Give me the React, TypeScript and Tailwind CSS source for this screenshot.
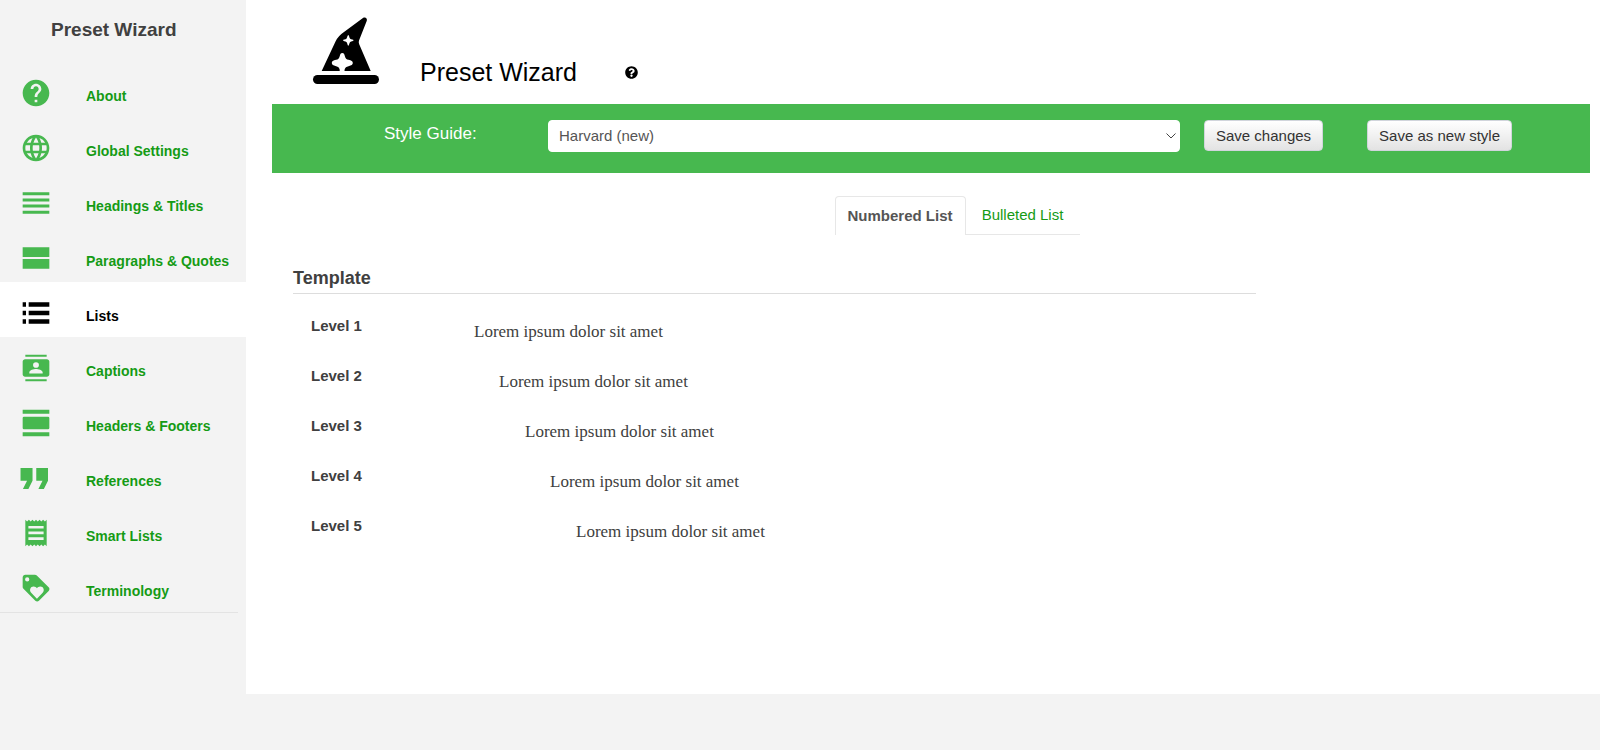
import type { ReactNode } from "react";
import { FaQuestionCircle } from "react-icons/fa";
import { MdHelp, MdLanguage } from "react-icons/md";

const icon = (body: ReactNode) => (
  <svg viewBox="0 0 24 24" fill="currentColor" className="size-8" aria-hidden="true">
    {body}
  </svg>
);

const menu = [
  { label: "About", icon: <MdHelp className="size-8" /> },
  { label: "Global Settings", icon: <MdLanguage className="size-8" /> },
  { label: "Headings & Titles", icon: icon(<path d="M2 4h20v2.25H2zM2 8.6h20v2.25H2zM2 13.1h20v2.25H2zM2 17.75h20V20H2z" />) },
  { label: "Paragraphs & Quotes", icon: icon(<path d="M2 4h20v7.3H2zM2 12.7h20V20H2z" />) },
  {
    label: "Lists",
    active: true,
    icon: icon(<path d="M2 4h2.5v3.3H2zM6.5 4H22v3.3H6.5zM2 10.3h2.5v3.4H2zM6.5 10.3H22v3.4H6.5zM2 16.7h2.5V20H2zM6.5 16.7H22V20H6.5z" />),
  },
  {
    label: "Captions",
    icon: icon(
      <path
        fillRule="evenodd"
        d="M4 2h16v1.6H4zM4 20.4h16V22H4zM3.8 5.4h16.4c1 0 1.8.8 1.8 1.7v9.8c0 .9-.8 1.7-1.8 1.7H3.8c-1 0-1.8-.8-1.8-1.7V7.1c0-.9.8-1.7 1.8-1.7zM12 7.6a2.2 2.1 0 1 0 0 4.2 2.2 2.1 0 1 0 0-4.2zM7 16.2h10v-1c0-1.6-3.3-2.5-5-2.5s-5 .9-5 2.5z"
      />,
    ),
  },
  {
    label: "Headers & Footers",
    icon: icon(<path d="M2 2h20v3H2zM3 7.3h18a1 1 0 0 1 1 1v7.4a1 1 0 0 1-1 1H3a1 1 0 0 1-1-1V8.3a1 1 0 0 1 1-1zM2 19h20v3H2z" />),
  },
  { label: "References", icon: icon(<path d="M.4 4.5h9V14l-3.1 6.2H2.2L5.3 14H.4zM12.2 4.5h8.8V14l-3.1 6.2h-4.1L16.900 14h-4.700z" />) },
  {
    label: "Smart Lists",
    icon: icon(
      <path
        fillRule="evenodd"
        d="M4 2l1.3 1.3L6.7 2 8 3.3 9.3 2l1.4 1.3L12 2l1.3 1.3L14.7 2 16 3.3 17.3 2l1.4 1.3L20 2v20l-1.3-1.3L17.3 22 16 20.7 14.7 22l-1.4-1.3L12 22l-1.3-1.3L9.3 22 8 20.7 6.7 22l-1.4-1.3L4 22zM6.3 6.7v1.9h11.4V6.7zM6.3 10.9v2h11.4v-2zM6.3 15.2v2h11.4v-2z"
      />,
    ),
  },
  {
    label: "Terminology",
    icon: icon(
      <path
        fillRule="evenodd"
        d="M4 2h7.200c.6 0 1 .2 1.400.6l8.900 8.900c.8.800.8 1.900 0 2.700l-7.300 7.300c-.8.800-1.900.8-2.700 0L2.600 12.600c-.4-.4-.6-.9-.6-1.400V4c0-1.100.9-2 2-2zM5.400 4a1.600 1.600 0 1 0 0 3.200 1.600 1.600 0 1 0 0-3.200zM12.700 20l4.300-4.400c1.700-1.900.6-4.700-1.800-4.700-1.200 0-1.900.6-2.500 1.300-.6-.7-1.300-1.300-2.500-1.300-2.400 0-3.500 2.800-1.800 4.700z"
      />,
    ),
  },
];

const levels = [
  { name: "Level 1", indent: "pl-0" },
  { name: "Level 2", indent: "pl-[25px]" },
  { name: "Level 3", indent: "pl-[51px]" },
  { name: "Level 4", indent: "pl-[76px]" },
  { name: "Level 5", indent: "pl-[102px]" },
];

function WizardHat() {
  return (
    <svg viewBox="0 0 66 66" className="size-[66px] overflow-visible" aria-hidden="true">
      <path d="M8.7 53 22.5 23.5Q25 18 31 14L50.3-.2C52.5-1.3 54.5.5 53.8 2.7L46 22.5Q45.4 24.3 46.2 26.2L57.7 53Z" />
      <rect y="57" width="66" height="9" rx="4.5" />
      <path
        fill="#fff"
        d="M35.3 17c.8 0 .9 3 1.9 3.7s3.4.8 3.4 1.600-2.600 1-3.400 1.700-1.100 3.700-1.900 3.700-1-3-1.900-3.700-3.400-.9-3.400-1.700 2.600-.9 3.400-1.600 1.100-3.700 1.900-3.700zM29.3 35c1.600 0 2 1 2.600 3.200.7 2.600 1.400 3 3.600 3.600 3 .8 4.300 1.500 4.300 3.200s-1.300 2.400-4.300 3.200c-2.200.6-3.300 1.300-3.800 3L31.400 53.500h-4.600L26.600 51.200c-.5-1.700-1.300-2.400-3.500-3-3-.8-4.300-1.500-4.300-3.200s1.300-2.400 4.300-3.200c2.200-.6 2.900-1 3.600-3.600.6-2.200 1-3.200 2.600-3.200z"
      />
    </svg>
  );
}

const button =
  "h-[31px] rounded border border-gray-300 bg-linear-to-b from-white to-[#e3e3e3] px-[11px] text-[15px] leading-5 text-[#333]";

export default function App() {
  return (
    <div className="min-h-screen bg-[#f3f3f3] font-['Liberation_Sans',Arial,sans-serif] text-[#404040]">
      <div className="flex min-h-[694px]">
        <aside className="w-[246px] shrink-0">
          <h2 className="pt-4 pl-[51px] text-[19px] leading-7 font-bold">Preset Wizard</h2>
          <nav className="mt-[18px]">
            {menu.map((item) => (
              <a
                key={item.label}
                href="#"
                className={`flex h-[55px] items-start pt-[15px] pl-5 text-sm font-bold whitespace-nowrap ${
                  item.active ? "bg-white text-black" : "text-[#159b15]"
                }`}
              >
                <span className={`w-[66px] shrink-0 ${item.active ? "text-black" : "text-[#47b84f]"}`}>{item.icon}</span>
                <span className="pt-[3px] leading-8">{item.label}</span>
              </a>
            ))}
          </nav>
          <hr className="mr-2 border-[#e3e3e3]" />
        </aside>

        <main className="min-w-0 flex-1 bg-white pr-2.5 pl-[26px]">
          <header className="flex h-[104px] items-end pb-5 pl-[41px]">
            <WizardHat />
            <h1 className="ml-[41px] text-[25px] leading-6 text-black">Preset Wizard</h1>
            <button type="button" aria-label="Help" className="mb-[5px] ml-12 text-black">
              <FaQuestionCircle className="size-[13px]" />
            </button>
          </header>

          <div className="flex h-[69px] items-start bg-[#47b84f] pt-4">
            <label htmlFor="style-guide" className="w-[276px] pl-[112px] text-[17px] leading-7 text-white">
              Style Guide:
            </label>
            <div className="relative mr-6 flex-1">
              <select
                id="style-guide"
                className="h-8 w-full appearance-none rounded border border-white bg-white px-2.5 text-[15px] text-[#555]"
              >
                <option>Harvard (new)</option>
              </select>
              <svg viewBox="0 0 10 6" fill="none" stroke="#444" className="pointer-events-none absolute top-[13px] right-1 w-2.5">
                <path d="m.5.5 4.5 4.5L9.5.5" />
              </svg>
            </div>
            <button type="button" className={button}>Save changes</button>
            <button type="button" className={`${button} mr-[78px] ml-11`}>Save as new style</button>
          </div>

          <div className="mt-[23px] flex justify-center pl-[52px]">
            <div role="tablist" className="flex w-[245px] text-[15px] leading-5">
              <button
                type="button"
                role="tab"
                aria-selected="true"
                className="h-[39px] rounded-t border border-b-0 border-[#e7e7e7] px-3 font-bold whitespace-nowrap text-[#555]"
              >
                Numbered List
              </button>
              <button
                type="button"
                role="tab"
                aria-selected="false"
                className="h-[39px] flex-1 border-b border-[#e7e7e7] px-3 whitespace-nowrap text-[#159b15]"
              >
                Bulleted List
              </button>
            </div>
          </div>

          <section className="mr-[334px] ml-[21px]">
            <h3 className="mt-7 border-b border-[#ddd] text-[18px] leading-[30px] font-bold">Template</h3>
            <dl className="mt-[18px]">
              {levels.map((level) => (
                <div key={level.name} className="flex h-[50px] pl-[18px]">
                  <dt className="w-[163px] text-[15px] leading-7 font-bold">{level.name}</dt>
                  <dd className={`pt-1.5 font-['Liberation_Serif',serif] text-[17px] leading-7 ${level.indent}`}>
                    Lorem ipsum dolor sit amet
                  </dd>
                </div>
              ))}
            </dl>
          </section>
        </main>
      </div>
    </div>
  );
}
